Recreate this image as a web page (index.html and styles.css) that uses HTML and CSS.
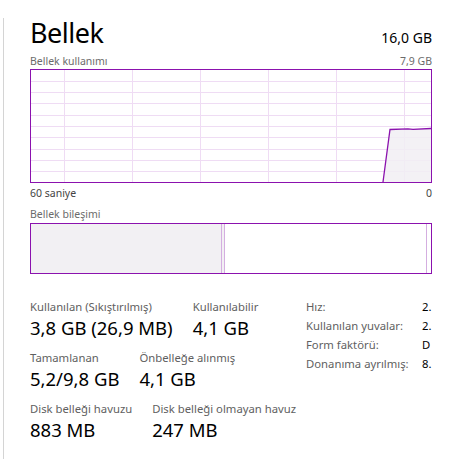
FILE: index.html
```html
<!DOCTYPE html>
<html lang="tr">
<head>
<meta charset="utf-8">
<title>Bellek</title>
<link rel="stylesheet" href="styles.css">
</head>
<body>
<div class="panel">
  <div class="header">
    <div class="title">Bellek</div>
    <div class="total">16,0 GB</div>
  </div>
  <div class="caption"><span>Bellek kullanımı</span><span>7,9 GB</span></div>
  <div class="graph">
    <svg width="400" height="112" viewBox="0 0 400 112">
      <g stroke="#efdcf4" stroke-width="1">
        <line x1="0" y1="11.5" x2="400" y2="11.5"/>
        <line x1="0" y1="22.5" x2="400" y2="22.5"/>
        <line x1="0" y1="33.5" x2="400" y2="33.5"/>
        <line x1="0" y1="45.5" x2="400" y2="45.5"/>
        <line x1="0" y1="56.5" x2="400" y2="56.5"/>
        <line x1="0" y1="67.5" x2="400" y2="67.5"/>
        <line x1="0" y1="79.5" x2="400" y2="79.5"/>
        <line x1="0" y1="90.5" x2="400" y2="90.5"/>
        <line x1="0" y1="101.5" x2="400" y2="101.5"/>
        <line x1="33.5" y1="0" x2="33.5" y2="112"/>
        <line x1="101.5" y1="0" x2="101.5" y2="112"/>
        <line x1="169.5" y1="0" x2="169.5" y2="112"/>
        <line x1="237.5" y1="0" x2="237.5" y2="112"/>
        <line x1="305.5" y1="0" x2="305.5" y2="112"/>
        <line x1="373.5" y1="0" x2="373.5" y2="112"/>
      </g>
      <polygon points="352,112 359,59.5 377,58.8 382,59.3 400,58.5 400,112" fill="#f1eef3" fill-opacity="0.85"/>
      <polyline points="352,112 359,59.5 377,58.8 382,59.3 400,58.5" fill="none" stroke="#8b12ae" stroke-width="1.3"/>
    </svg>
  </div>
  <div class="axis"><span>60 saniye</span><span>0</span></div>
  <div class="caption comp-caption"><span>Bellek bileşimi</span></div>
  <div class="comp">
    <div class="comp-used"></div>
    <div class="comp-sep"></div>
    <div class="comp-mod"></div>
    <div class="comp-sep"></div>
    <div class="comp-free"></div>
    <div class="comp-sep"></div>
    <div class="comp-end"></div>
  </div>
  <div class="stats">
    <div class="main-stats">
      <div class="srow">
        <div class="stat"><div class="label">Kullanılan (Sıkıştırılmış)</div><div class="value">3,8 GB (26,9 MB)</div></div>
        <div class="stat"><div class="label">Kullanılabilir</div><div class="value">4,1 GB</div></div>
      </div>
      <div class="srow">
        <div class="stat"><div class="label">Tamamlanan</div><div class="value">5,2/9,8 GB</div></div>
        <div class="stat"><div class="label">Önbelleğe alınmış</div><div class="value">4,1 GB</div></div>
      </div>
      <div class="srow">
        <div class="stat"><div class="label">Disk belleği havuzu</div><div class="value">883 MB</div></div>
        <div class="stat"><div class="label">Disk belleği olmayan havuz</div><div class="value">247 MB</div></div>
      </div>
    </div>
    <div class="side">
      <div class="k">Hız:</div><div class="v">2.</div>
      <div class="k">Kullanılan yuvalar:</div><div class="v">2.</div>
      <div class="k">Form faktörü:</div><div class="v">D</div>
      <div class="k">Donanıma ayrılmış:</div><div class="v">8.</div>
    </div>
  </div>
</div>
</body>
</html>
```

FILE: styles.css
```css
html, body {
  margin: 0;
  padding: 0;
  background: #ffffff;
}
body {
  font-family: "Noto Sans", "Open Sans", sans-serif;
  color: #000;
  width: 451px;
  height: 475px;
  overflow: hidden;
}
.panel {
  margin-left: 3px;
  margin-top: 18px;
  height: 441px;
  border-left: 1px solid #d4d4d4;
  padding-left: 26px;
  width: 402px;
  box-sizing: content-box;
}
.header {
  display: flex;
  justify-content: space-between;
  align-items: baseline;
  height: 36px;
}
.title {
  font-size: 27px;
  line-height: 30px;
  letter-spacing: -0.5px;
}
.total {
  font-size: 14px;
  line-height: 20px;
}
.caption {
  display: flex;
  justify-content: space-between;
  font-size: 10.5px;
  line-height: 14px;
  color: #6b6b6b;
  height: 15px;
}
.graph {
  width: 400px;
  height: 112px;
  border: 1px solid #8b12ae;
  background: #fff;
}
.graph svg {
  display: block;
}
.axis {
  display: flex;
  justify-content: space-between;
  font-size: 10.5px;
  line-height: 14px;
  color: #444;
  height: 21px;
  margin-top: 3px;
}
.comp-caption {
  height: 16px;
}
.comp {
  width: 400px;
  height: 49px;
  border: 1px solid #8b12ae;
  display: flex;
}
.comp-used {
  width: 190px;
  background: #f2f0f3;
}
.comp-mod {
  width: 2px;
  background: #f2f0f3;
}
.comp-sep {
  width: 1px;
  background: #d4aee0;
}
.comp-free {
  width: 201px;
  background: #fff;
}
.comp-end {
  flex: 1;
  background: #fff;
}
.stats {
  display: flex;
  margin-top: 25px;
}
.main-stats {
  width: 276px;
}
.srow {
  display: flex;
  gap: 20px;
  height: 51px;
}
.label {
  font-size: 11.3px;
  line-height: 16px;
  color: #5f5f5f;
  white-space: nowrap;
}
.value {
  font-size: 18.5px;
  line-height: 25px;
  white-space: nowrap;
}
.side {
  display: grid;
  grid-template-columns: 116px 10px;
  grid-auto-rows: 19px;
  font-size: 11.3px;
  line-height: 16px;
}
.k {
  color: #5f5f5f;
  white-space: nowrap;
}
.v {
  color: #000;
  white-space: nowrap;
}
```
